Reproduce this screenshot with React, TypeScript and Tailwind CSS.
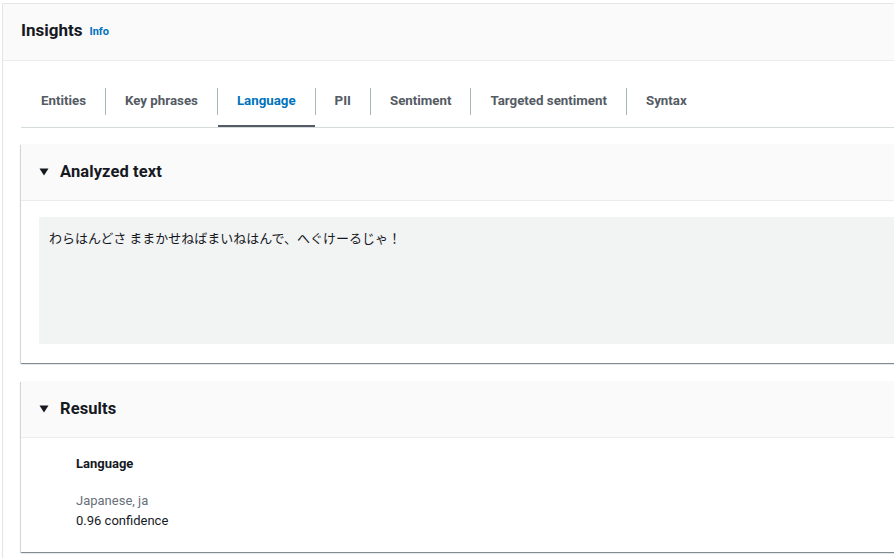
const tabs = ["Entities", "Key phrases", "Language", "PII", "Sentiment", "Targeted sentiment", "Syntax"];

const Caret = () => (
  <svg width="10" height="8" viewBox="0 0 10 8" className="shrink-0">
    <polygon points="0.5,0.5 9.5,0.5 5,7.5" fill="#16191f" />
  </svg>
);

const Panel = ({ title, children }: { title: string; children: React.ReactNode }) => (
  <div className="bg-white shadow-[0_1px_1px_0_rgba(0,28,36,0.35),1px_1px_1px_0_rgba(0,28,36,0.12),-1px_1px_1px_0_rgba(0,28,36,0.12)]">
    <div className="h-[57px] bg-[#fafafa] border-b border-[#eaeded] flex items-center gap-[11px] pl-[18px]">
      <Caret />
      <span className="text-[16.5px] font-bold text-[#16191f] tracking-[0.1px]">{title}</span>
    </div>
    {children}
  </div>
);

export default function App() {
  return (
    <div className="w-[894px] h-[558px] overflow-hidden bg-white pt-[3px] pl-[2px] font-['Roboto',sans-serif]">
      <div className="w-[1000px] h-[600px] bg-white border-l border-t border-[#e3e6e8]">
        <div className="h-[57px] bg-[#fafafa] border-b border-[#eaeded] flex items-center gap-[7px] pl-[18px]">
          <span className="text-[17px] font-bold text-[#16191f] -mt-[2px]">Insights</span>
          <span className="text-[11px] font-bold text-[#0073bb]">Info</span>
        </div>
        <div className="pl-[18px]">
          <div className="mt-[15px] flex items-center h-[52px] border-b border-[#d5dbdb]">
            {tabs.map((t, i) => (
              <div key={t} className="flex items-center h-full">
                {i > 0 && <div className="w-px h-[27px] bg-[#aab7b8]" />}
                <div
                  className={
                    "h-full flex items-center pr-[19px] text-[13.3px] font-bold border-b-2 " +
                    (i === 0 ? "pl-[20px] " : "pl-[19px] ") +
                    (t === "Language" ? "text-[#0073bb] border-[#545b64]" : "text-[#545b64] border-transparent")
                  }
                >
                  {t}
                </div>
              </div>
            ))}
          </div>

          <div className="mt-[16px]">
            <Panel title="Analyzed text">
              <div className="pt-4 pb-[19px] pl-[18px]">
                <div className="h-[127px] bg-[#f2f3f3] pl-[10px] pt-[10px] text-[13px] leading-[22px] text-[#16191f] font-['Noto_Sans_CJK_JP',sans-serif]">
                  わらはんどさ ままかせねばまいねはんで、へぐけーるじゃ！
                </div>
              </div>
            </Panel>
          </div>

          <div className="mt-[18px]">
            <Panel title="Results">
              <div className="pl-[55px] pt-[16px] pb-[21px]">
                <div className="text-[13px] font-bold text-[#16191f] leading-5">Language</div>
                <div className="mt-[17px] text-[13px] leading-5 text-[#687078]">Japanese, ja</div>
                <div className="text-[13px] leading-5 text-[#16191f]">0.96 confidence</div>
              </div>
            </Panel>
          </div>
        </div>
      </div>
    </div>
  );
}
